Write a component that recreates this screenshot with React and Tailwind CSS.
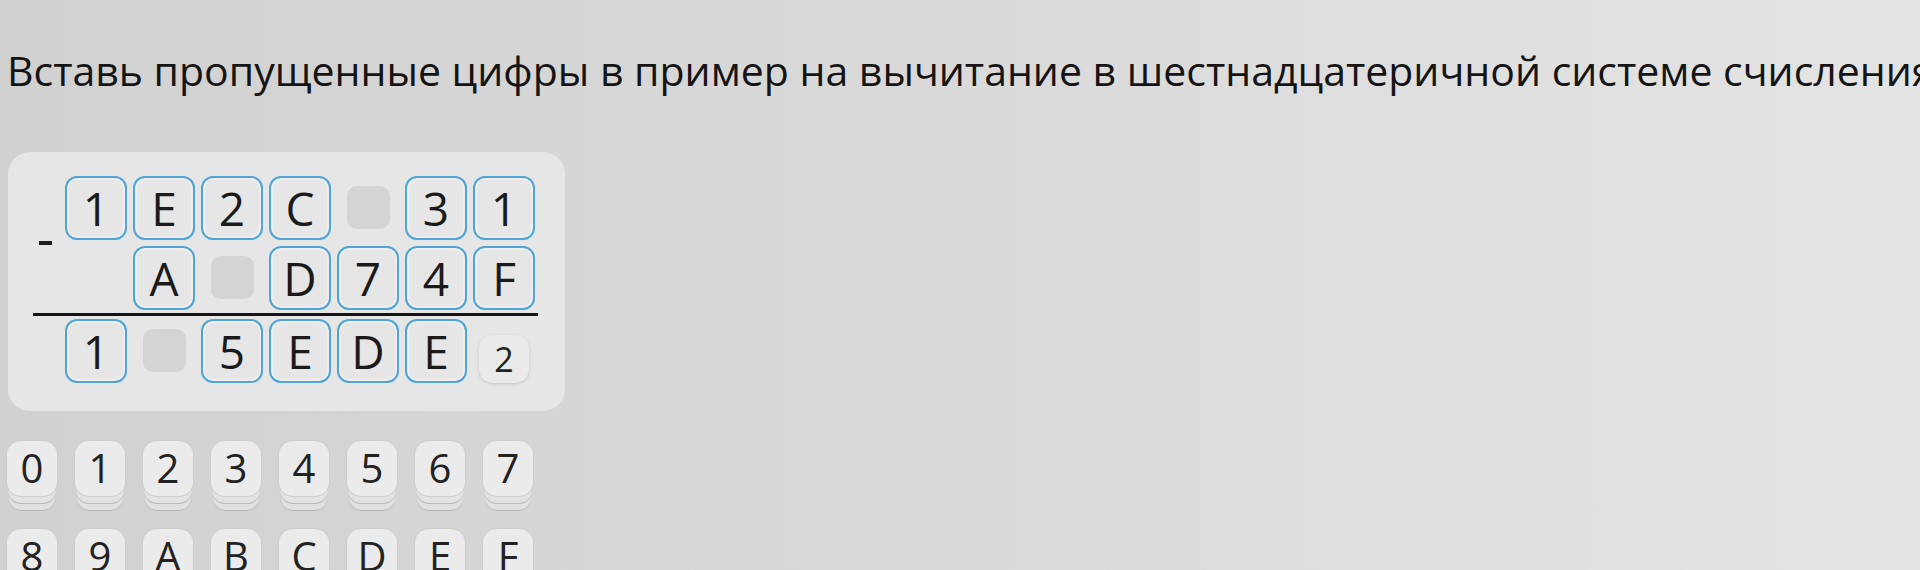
import React from 'react';

// Пример на вычитание: null = пустая ячейка, '' = место без ячейки
const topRow = ['1', 'E', '2', 'C', null, '3', '1'];
const midRow = ['', 'A', null, 'D', '7', '4', 'F'];
const resultRow = ['1', null, '5', 'E', 'D', 'E'];

const keys = [
  ['0', '1', '2', '3', '4', '5', '6', '7'],
  ['8', '9', 'A', 'B', 'C', 'D', 'E', 'F'],
];

const font = { fontFamily: '"Open Sans", "Noto Sans", sans-serif' };

const Cell = ({ value }) => {
  if (value === '') return <div className="w-[62px] h-[64px]" />;
  if (value === null) {
    return (
      <div className="w-[62px] h-[64px] flex items-center justify-center">
        <div className="w-[43px] h-[43px] rounded-[10px] bg-[#d3d4d3]" />
      </div>
    );
  }
  return (
    <div className="w-[62px] h-[64px] rounded-[12px] border-2 border-[#4ea5d6] shadow-[inset_0_0_0_2px_#eeeeee] flex items-center justify-center text-[46px] leading-none text-[#1a1a1a]">
      {value}
    </div>
  );
};

const Row = ({ cells }) => (
  <div className="flex gap-[6px]">
    {cells.map((c, i) => (
      <Cell key={i} value={c} />
    ))}
  </div>
);

const Key = ({ label }) => (
  <button className="w-[50px] h-[55px] rounded-[14px] bg-[#ebebeb] text-[40px] leading-none text-[#222] flex items-center justify-center shadow-[0_0_0_1px_#cdcdcd,0_8px_0_-1px_#e3e3e3,0_9px_0_-1px_#b9b9b9,0_16px_0_-2px_#e1e1e1,0_17px_0_-2px_#b7b7b7]">
    {label}
  </button>
);

const App = () => {
  return (
    <div
      className="w-[1920px] h-[570px] overflow-hidden bg-linear-to-r from-[#d0d1d0] via-[#d9dad9] to-[#e4e4e4]"
      style={font}
    >
      <h1 className="pt-[40px] pl-[7px] text-[41px] font-normal text-[#141414] whitespace-nowrap">
        Вставь пропущенные цифры в пример на вычитание в шестнадцатеричной системе счисления
      </h1>

      {/* Карточка с примером */}
      <div className="mt-[50px] ml-[8px] w-[557px] rounded-[22px] bg-[#e5e6e5] pt-[24px] pl-[24px] pb-[28px]">
        <div className="flex gap-[6px]">
          <div className="w-[27px] flex items-center">
            <div className="ml-[7px] w-[13px] h-[4px] bg-[#1c1c1c]" />
          </div>
          <div className="flex flex-col gap-[6px]">
            <Row cells={topRow} />
            <Row cells={midRow} />
          </div>
        </div>

        <div className="mt-[3px] mb-[3px] ml-[1px] w-[505px] h-[3px] bg-[#141414]" />

        <div className="flex gap-[6px]">
          <div className="w-[27px]" />
          <Row cells={resultRow} />
          <div className="w-[62px] h-[64px] flex items-start justify-center pt-[16px]">
            <div className="w-[50px] h-[48px] rounded-[14px] bg-[#eaeaea] shadow-[0_1px_3px_#c4c4c4] flex items-center justify-center text-[34px] leading-none text-[#222]">
              2
            </div>
          </div>
        </div>
      </div>

      {/* Клавиатура */}
      <div className="mt-[30px] ml-[7px] flex flex-col gap-[33px]">
        {keys.map((row, i) => (
          <div key={i} className="flex gap-[18px]">
            {row.map((k) => (
              <Key key={k} label={k} />
            ))}
          </div>
        ))}
      </div>
    </div>
  );
};

export default App;
